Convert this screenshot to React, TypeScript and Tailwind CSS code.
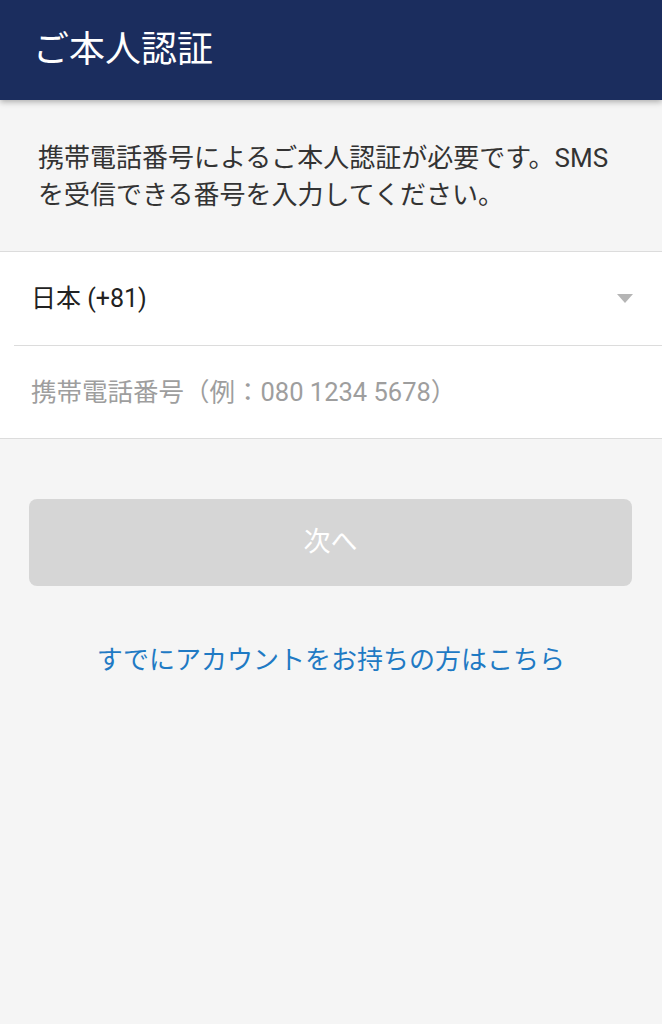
import React from 'react'

const font = { fontFamily: 'Roboto, "Noto Sans CJK JP", sans-serif' }

export default function App() {
  return (
    <div className="min-h-[1024px] bg-[#f5f5f5]" style={font}>
      <header className="relative z-10 flex h-[100px] items-center bg-[#1b2d5e] px-[33px] shadow-[0_2px_6px_rgba(0,0,0,0.3)]">
        <h1 className="text-[36px] font-normal leading-none text-white">ご本人認証</h1>
      </header>

      <p className="px-[38px] pb-[37px] pt-[40px] text-[26px] leading-[37px] text-[#333333]">
        携帯電話番号によるご本人認証が必要です。SMSを受信できる番号を入力してください。
      </p>

      <div className="border-y border-[#dcdcdc] bg-white">
        <div className="flex h-[93px] items-center justify-between pl-[31px] pr-[29px]">
          <span className="text-[25px] text-[#222222]">日本 (+81)</span>
          <svg width="16" height="9" viewBox="0 0 16 9">
            <path d="M0 0 H16 L8 9 Z" fill="#b5b5b5" />
          </svg>
        </div>
        <div className="ml-[14px] border-t border-[#dcdcdc]" />
        <div className="flex h-[92px] items-center pl-[31px]">
          <span className="text-[25.5px] text-[#9e9e9e]">携帯電話番号（例：080 1234 5678）</span>
        </div>
      </div>

      <div className="ml-[29px] mr-[30px] mt-[60px] flex h-[87px] items-center justify-center rounded-lg bg-[#d6d6d6]">
        <span className="text-[27px] text-white">次へ</span>
      </div>

      <p className="mt-[56px] text-center text-[26px] leading-[37px] text-[#1f7ac4]">
        すでにアカウントをお持ちの方はこちら
      </p>
    </div>
  )
}
